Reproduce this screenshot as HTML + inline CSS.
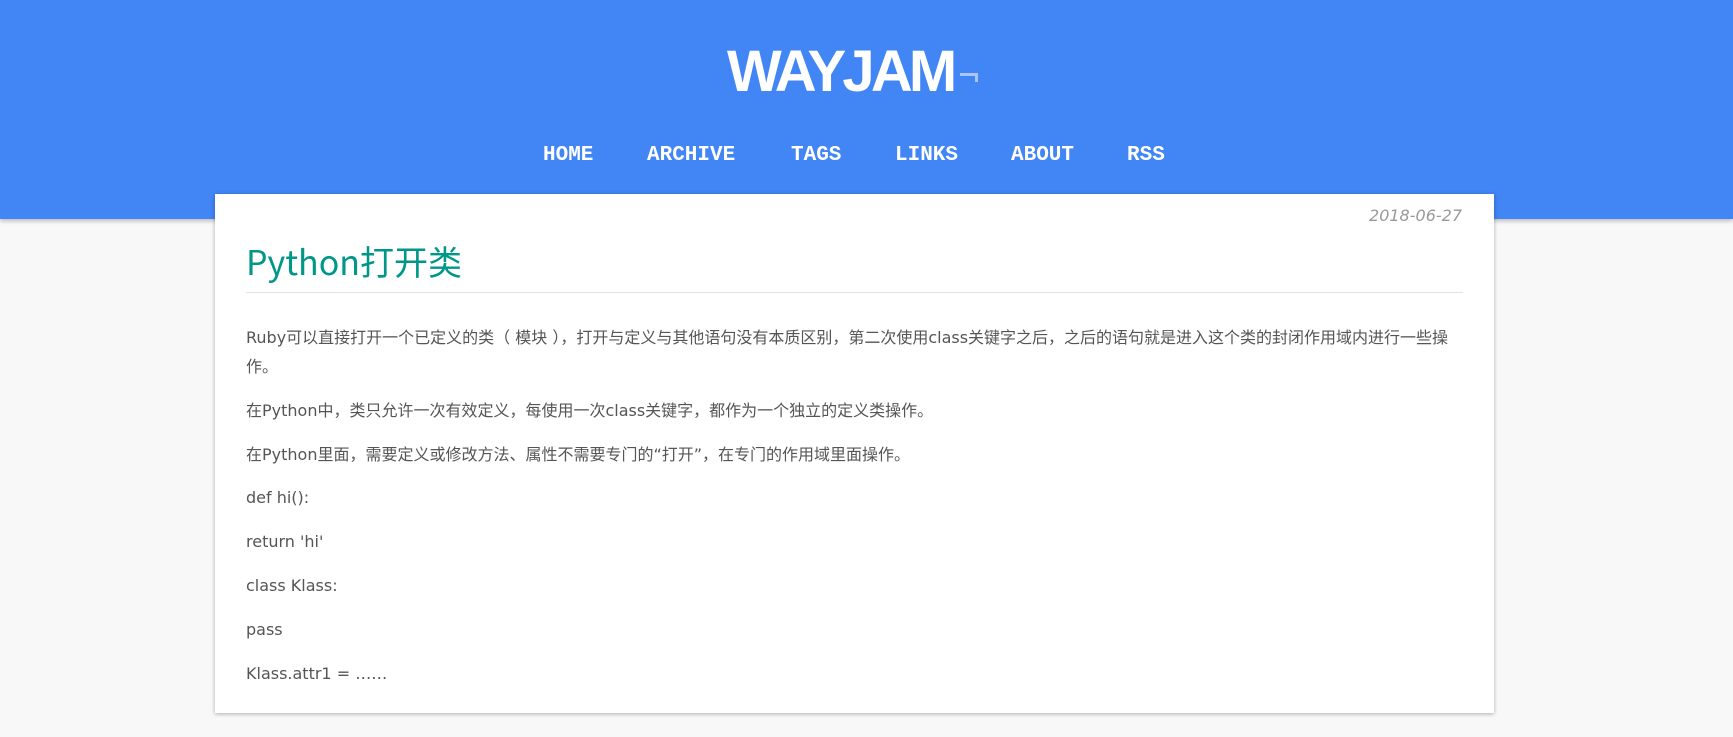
<!DOCTYPE html>
<html><head><meta charset="utf-8"><style>
*{margin:0;padding:0;box-sizing:border-box}
html,body{width:1733px;height:737px;overflow:hidden;background:#f8f8f8;font-family:"Noto Sans CJK SC","Liberation Sans",sans-serif}
.hdr{position:absolute;left:0;top:0;width:1733px;height:219px;background:#4285f4;box-shadow:0 2px 4px rgba(0,0,0,.25)}
.logo{position:absolute;left:727px;top:37px;font-family:"Liberation Sans",sans-serif;font-size:58px;font-weight:bold;color:#fff;letter-spacing:-3.8px;line-height:70px;white-space:nowrap}
.mark{position:absolute;left:960px;top:73px;width:18px;height:9px;border-top:3px solid #a9c6fa;border-right:3px solid #a9c6fa}
.nav a{position:absolute;top:144px;font-family:"Liberation Mono",monospace;font-weight:bold;color:#fff;font-size:21px;line-height:24px;text-decoration:none}
.card{position:absolute;left:215px;top:194px;width:1279px;height:519px;background:#fff;box-shadow:0 1px 4px rgba(0,0,0,.3)}
.date{position:absolute;right:32px;top:12px;font-style:italic;color:#999;font-size:16px;font-family:"DejaVu Sans",sans-serif}
h1{position:absolute;left:31px;top:44px;font-weight:normal;color:#009688;font-size:34px;line-height:46px}
.rule{position:absolute;left:31px;right:31px;top:98px;height:1px;background:#e2e2e2}
.body{position:absolute;left:31px;right:31px;top:129px;color:#555;font-size:16px;line-height:29px;font-family:"DejaVu Sans","Noto Sans CJK SC",sans-serif}
.body p{margin-bottom:14.8px}
</style></head><body>
<div class="hdr">
<div class="logo">WAYJAM</div><div class="mark"></div>
<div class="nav">
<a style="left:543px">HOME</a><a style="left:647px">ARCHIVE</a><a style="left:791px">TAGS</a><a style="left:895px">LINKS</a><a style="left:1011px">ABOUT</a><a style="left:1127px">RSS</a>
</div>
</div>
<div class="card">
<div class="date">2018-06-27</div>
<h1>Python打开类</h1>
<div class="rule"></div>
<div class="body">
<p>Ruby可以直接打开一个已定义的类（ 模块 ），打开与定义与其他语句没有本质区别，第二次使用class关键字之后，之后的语句就是进入这个类的封闭作用域内进行一些操作。</p>
<p>在Python中，类只允许一次有效定义，每使用一次class关键字，都作为一个独立的定义类操作。</p>
<p>在Python里面，需要定义或修改方法、属性不需要专门的“打开”，在专门的作用域里面操作。</p>
<p>def hi():</p>
<p>return 'hi'</p>
<p>class Klass:</p>
<p>pass</p>
<p>Klass.attr1 = ……</p>
</div>
</div>
</body></html>
